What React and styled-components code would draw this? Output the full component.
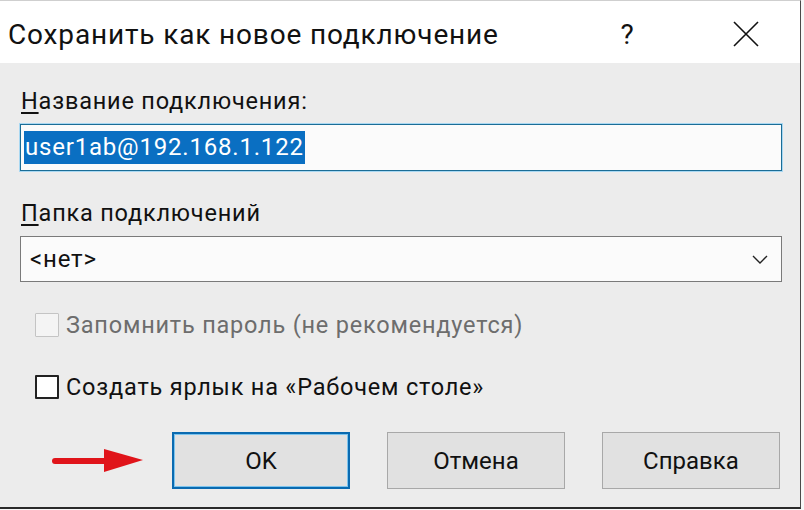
import React from "react";
import styled, { createGlobalStyle } from "styled-components";

const Global = createGlobalStyle`
  html, body { margin: 0; padding: 0; background: #f7f7f7; }
  body { font-family: Roboto, "Noto Sans", sans-serif; }
  * { box-sizing: border-box; }
`;

const Page = styled.div`
  width: 804px;
  height: 510px;
  overflow: hidden;
  background: #f7f7f7;
`;

const Window = styled.div`
  width: 801px;
  height: 509px;
  display: flex;
  flex-direction: column;
  background: #ececec;
  border-right: 1px solid #4a4a4a;
  border-bottom: 2px solid #2a2a2a;
  border-top: 1px solid #cfcfcf;
`;

const TitleBar = styled.div`
  height: 62px;
  background: #ffffff;
  display: flex;
  align-items: center;
  padding: 4px 0 0 8px;
`;

const Title = styled.div`
  flex: 1;
  font-size: 28px;
  color: #111;
  letter-spacing: 0.85px;
`;

const TitleButton = styled.div`
  width: ${(p) => p.$w}px;
  display: flex;
  justify-content: center;
  align-items: center;
  font-size: 28px;
  color: #111;
  margin-right: ${(p) => p.$mr || 0}px;
`;

const Body = styled.div`
  flex: 1;
  display: flex;
  flex-direction: column;
  padding: 24px 18px 0 20px;
  letter-spacing: 0.8px;
`;

const Label = styled.div`
  font-size: 23.5px;
  line-height: 28px;
  color: #111;
  margin-top: ${(p) => p.$mt || 0}px;
  margin-left: 1px;
`;

const Access = styled.span`
  text-decoration: underline;
  text-underline-offset: 3px;
`;

const TextField = styled.div`
  margin-top: 9px;
  height: 47px;
  background: #fbfbfb;
  border: 1px solid #1b6d96;
  box-shadow: 0 0 0 1px #a9d8f2;
  display: flex;
  align-items: center;
  padding-left: 3px;
`;

const Selected = styled.span`
  background: #0a6fc2;
  color: #fff;
  font-size: 24px;
  line-height: 33px;
  padding: 0 1px;
`;

const Select = styled.div`
  margin-top: 9px;
  height: 46px;
  background: #fbfbfb;
  border: 1px solid #7a7a7a;
  display: flex;
  align-items: center;
  justify-content: space-between;
  padding: 0 13px 0 9px;
  font-size: 24px;
  color: #111;
`;

const CheckRow = styled.div`
  display: flex;
  align-items: center;
  gap: 7px;
  margin-top: ${(p) => p.$mt}px;
  margin-left: 15px;
  font-size: 23.5px;
  color: ${(p) => (p.$disabled ? "#6d6d6d" : "#111")};
`;

const Box = styled.div`
  width: 24px;
  height: 24px;
  background: ${(p) => (p.$disabled ? "#f4f4f4" : "#fff")};
  border: ${(p) => (p.$disabled ? "1px solid #c4c4c4" : "2px solid #222")};
  border-radius: 1px;
`;

const ButtonRow = styled.div`
  display: flex;
  align-items: center;
  margin-top: 31px;
  padding-left: 32px;
  gap: 37px;
  letter-spacing: 0;
`;

const Arrow = styled.svg`
  width: 92px;
  height: 26px;
  margin-right: -9px;
`;

const Button = styled.div`
  width: 178px;
  height: 57px;
  display: flex;
  align-items: center;
  justify-content: center;
  background: #e1e1e1;
  border: ${(p) => (p.$primary ? "2px solid #0a6ab0" : "1px solid #a8a8a8")};
  box-shadow: ${(p) => (p.$primary ? "inset 0 0 0 1px #7cc4ee" : "none")};
  font-size: 24px;
  color: #111;
`;

export default function App() {
  return (
    <Page>
      <Global />
      <Window>
        <TitleBar>
          <Title>Сохранить как новое подключение</Title>
          <TitleButton $w={30} $mr={84}>?</TitleButton>
          <TitleButton $w={40} $mr={34}>
            <svg width="26" height="26" viewBox="0 0 26 26">
              <path d="M1 1 L25 25 M25 1 L1 25" stroke="#111" strokeWidth="1.6" fill="none" />
            </svg>
          </TitleButton>
        </TitleBar>
        <Body>
          <Label>
            <Access>Н</Access>азвание подключения:
          </Label>
          <TextField>
            <Selected>user1ab@192.168.1.122</Selected>
          </TextField>
          <Label $mt={28}>
            <Access>П</Access>апка подключений
          </Label>
          <Select>
            <span>&lt;нет&gt;</span>
            <svg width="16" height="9" viewBox="0 0 16 9">
              <path d="M1 1 L8 8 L15 1" stroke="#222" strokeWidth="1.4" fill="none" />
            </svg>
          </Select>
          <CheckRow $mt={29} $disabled>
            <Box $disabled />
            Запомнить пароль (не рекомендуется)
          </CheckRow>
          <CheckRow $mt={34}>
            <Box />
            Создать ярлык на «Рабочем столе»
          </CheckRow>
          <ButtonRow>
            <Arrow viewBox="0 0 92 26">
              <path d="M3 13 H56" stroke="#e0141a" strokeWidth="6" strokeLinecap="round" />
              <path d="M52 1 L91 12 L52 24 Z" fill="#e0141a" />
            </Arrow>
            <Button $primary>OK</Button>
            <Button>Отмена</Button>
            <Button>Справка</Button>
          </ButtonRow>
        </Body>
      </Window>
    </Page>
  );
}
